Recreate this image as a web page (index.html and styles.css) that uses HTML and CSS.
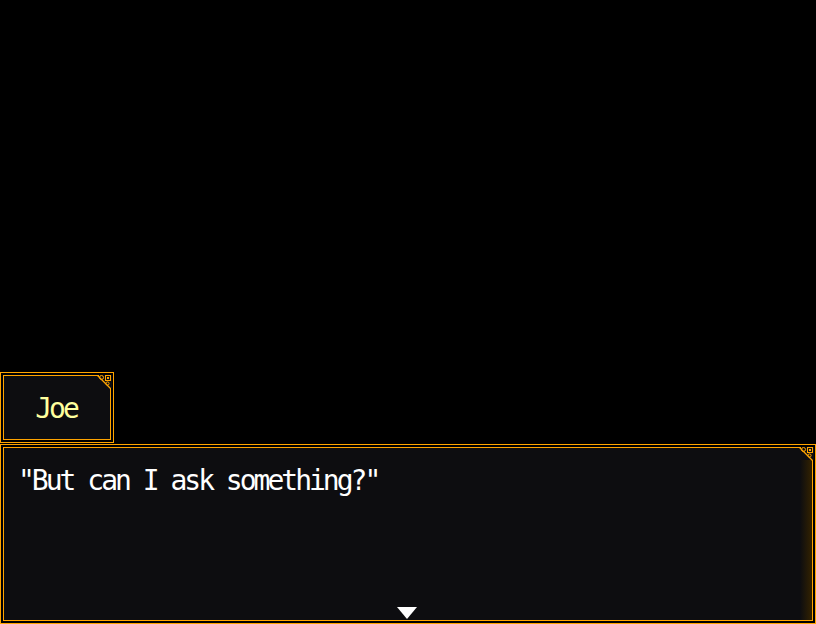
FILE: index.html
```html
<!DOCTYPE html>
<html>
<head>
<meta charset="utf-8">
<link rel="stylesheet" href="styles.css">
</head>
<body>
<div class="screen">
  <div class="window name-window">
    <div class="window-inner name-inner">
      <span class="name">Joe</span>
      <svg class="ornament" width="17" height="16" viewBox="0 0 17 16">
        <rect x="4" y="0" width="13" height="13" fill="#0d0d10"/>
        <path d="M2.5 0.5 L15.5 13.5" fill="none" stroke="#ffa400" stroke-width="1.2"/>
        <circle cx="6.5" cy="2.5" r="2" fill="none" stroke="#ffa400" stroke-width="1"/>
        <rect x="10.5" y="0.5" width="5" height="5" fill="none" stroke="#ffa400" stroke-width="1"/>
        <rect x="12" y="2" width="2" height="2" fill="#ffa400"/>
        <circle cx="12.5" cy="8.5" r="1.6" fill="none" stroke="#ffa400" stroke-width="1"/>
      </svg>
    </div>
  </div>
  <div class="window message-window">
    <div class="window-inner message-inner">
      <p class="message">"But can I ask something?"</p>
      <svg class="ornament" width="17" height="16" viewBox="0 0 17 16">
        <rect x="4" y="0" width="13" height="13" fill="#0d0d10"/>
        <path d="M2.5 0.5 L15.5 13.5" fill="none" stroke="#ffa400" stroke-width="1.2"/>
        <circle cx="6.5" cy="2.5" r="2" fill="none" stroke="#ffa400" stroke-width="1"/>
        <rect x="10.5" y="0.5" width="5" height="5" fill="none" stroke="#ffa400" stroke-width="1"/>
        <rect x="12" y="2" width="2" height="2" fill="#ffa400"/>
        <circle cx="12.5" cy="8.5" r="1.6" fill="none" stroke="#ffa400" stroke-width="1"/>
      </svg>
      <svg class="pause" width="20" height="12" viewBox="0 0 20 12">
        <polygon points="0,0 20,0 10,12" fill="#ffffff"/>
      </svg>
    </div>
  </div>
</div>
</body>
</html>
```

FILE: styles.css
```css
html, body {
  margin: 0;
  padding: 0;
  background: #000;
}

.screen {
  width: 816px;
  height: 624px;
  display: flex;
  flex-direction: column;
  justify-content: flex-end;
  gap: 1px;
  font-family: "DejaVu Sans Mono", "Liberation Mono", monospace;
}

.window {
  box-sizing: border-box;
  border: 1px solid #ffa400;
  padding: 2px;
  background: #000;
  display: flex;
}

.window-inner {
  position: relative;
  flex: 1;
  box-sizing: border-box;
  border: 1px solid #ffa400;
  background: #0d0d10;
}

.name-window {
  width: 114px;
  height: 71px;
}

.name-inner {
  display: flex;
  align-items: center;
  justify-content: center;
}

.name {
  color: #ffff9e;
  font-size: 28px;
  letter-spacing: -3px;
  line-height: 30px;
  padding-right: 2px;
  padding-top: 2px;
}

.message-window {
  width: 816px;
  height: 180px;
}

.message-inner {
  background: linear-gradient(90deg, #0d0d10 0, #0d0d10 calc(100% - 12px), #332200 100%);
  padding: 15px 14px 0 14px;
}

.message {
  margin: 0;
  color: #ffffff;
  font-size: 28px;
  letter-spacing: -3px;
  line-height: 36px;
  white-space: pre;
}

.ornament {
  position: absolute;
  top: -1px;
  right: -2px;
  display: block;
}

.pause {
  position: absolute;
  bottom: 1px;
  left: 50%;
  margin-left: -11px;
  display: block;
}
```
